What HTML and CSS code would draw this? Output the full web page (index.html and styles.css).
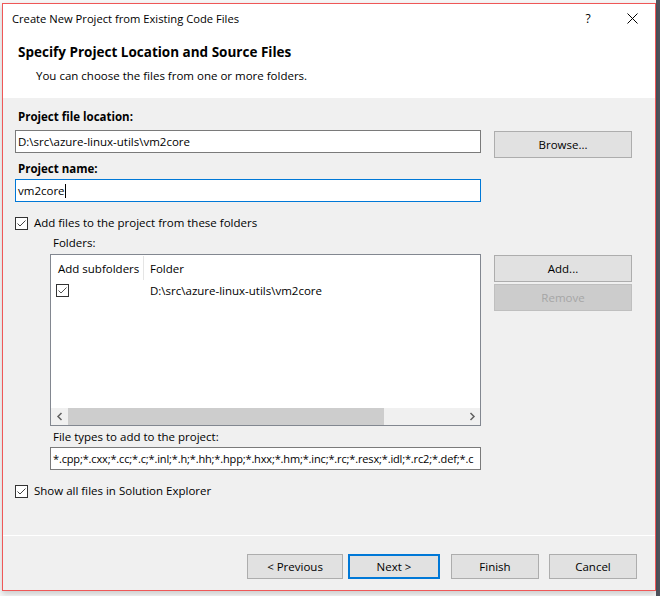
FILE: index.html
```html
<!DOCTYPE html>
<html>
<head>
<meta charset="utf-8">
<link rel="stylesheet" href="styles.css">
</head>
<body>
<div class="window">
  <div class="top">
    <div class="titlebar">
      <span class="title">Create New Project from Existing Code Files</span>
      <span class="cap-btn help">?</span>
      <span class="cap-btn close">
        <svg width="11" height="11" viewBox="0 0 11 11"><path d="M0.5 0.5 L10.5 10.5 M10.5 0.5 L0.5 10.5" stroke="#000" stroke-width="1" fill="none"/></svg>
      </span>
    </div>
    <div class="header">
      <div class="heading">Specify Project Location and Source Files</div>
      <div class="subheading">You can choose the files from one or more folders.</div>
    </div>
  </div>

  <div class="content">
    <div class="label bold first">Project file location:</div>
    <div class="row">
      <div class="textbox">D:\src\azure-linux-utils\vm2core</div>
      <div class="btn side-btn">Browse...</div>
    </div>
    <div class="label bold name-label">Project name:</div>
    <div class="textbox focused">vm2core<span class="caret"></span></div>

    <div class="check-row add-files">
      <span class="checkbox"><svg width="13" height="13" viewBox="0 0 13 13"><path d="M2.5 6.5 L5 9 L10.5 3.5" stroke="#444" stroke-width="1" fill="none"/></svg></span>
      <span>Add files to the project from these folders</span>
    </div>

    <div class="indent">
      <div class="label folders-label">Folders:</div>
      <div class="row folders-row">
        <div class="listbox">
          <div class="list-head">
            <div class="col1">Add subfolders</div>
            <div class="col-sep"></div>
            <div class="col2">Folder</div>
          </div>
          <div class="list-row">
            <div class="col1 cell-check"><span class="checkbox"><svg width="13" height="13" viewBox="0 0 13 13"><path d="M2.5 6.5 L5 9 L10.5 3.5" stroke="#555" stroke-width="1" fill="none"/></svg></span></div>
            <div class="col2 cell-text">D:\src\azure-linux-utils\vm2core</div>
          </div>
          <div class="list-fill"></div>
          <div class="hscroll">
            <div class="arrow"><svg width="8" height="9" viewBox="0 0 8 9"><path d="M5.5 1 L2 4.5 L5.5 8" stroke="#606060" stroke-width="1.5" fill="none"/></svg></div>
            <div class="thumb"></div>
            <div class="track"></div>
            <div class="arrow"><svg width="8" height="9" viewBox="0 0 8 9"><path d="M2.5 1 L6 4.5 L2.5 8" stroke="#606060" stroke-width="1.5" fill="none"/></svg></div>
          </div>
        </div>
        <div class="side-col">
          <div class="btn side-btn add-btn">Add...</div>
          <div class="btn side-btn disabled">Remove</div>
        </div>
      </div>
      <div class="label types-label">File types to add to the project:</div>
      <div class="textbox types-box"><span class="types-text">*.cpp;*.cxx;*.cc;*.c;*.inl;*.h;*.hh;*.hpp;*.hxx;*.hm;*.inc;*.rc;*.resx;*.idl;*.rc2;*.def;*.c</span></div>
    </div>

    <div class="check-row show-all">
      <span class="checkbox"><svg width="13" height="13" viewBox="0 0 13 13"><path d="M2.5 6.5 L5 9 L10.5 3.5" stroke="#444" stroke-width="1" fill="none"/></svg></span>
      <span>Show all files in Solution Explorer</span>
    </div>
  </div>

  <div class="footer">
    <div class="btn foot-btn prev">&lt; Previous</div>
    <div class="btn foot-btn next">Next &gt;</div>
    <div class="btn foot-btn finish">Finish</div>
    <div class="btn foot-btn cancel">Cancel</div>
  </div>
</div>
</body>
</html>
```
FILE: styles.css
```css
html, body {
  margin: 0;
  padding: 0;
  height: 596px;
  overflow: hidden;
}
body {
  background: linear-gradient(to right, #f7f7f7 656px, #4f535d 656px);
  font-family: "Open Sans", "Noto Sans", "Liberation Sans", sans-serif;
  font-size: 11.5px;
  color: #000;
}
.window {
  box-sizing: border-box;
  width: 654px;
  height: 588px;
  margin: 3px 0 0 2px;
  border: 1px solid #ef5757;
  background: #f0f0f0;
  display: flex;
  flex-direction: column;
  box-shadow: 0 3px 6px rgba(0, 0, 0, 0.18);
}
.top {
  background: #fff;
  height: 94px;
}
.titlebar {
  height: 28px;
  display: flex;
  align-items: center;
}
.title {
  padding-left: 9px;
  flex: 1;
  font-size: 11.2px;
}
.cap-btn {
  height: 28px;
  display: flex;
  align-items: center;
  justify-content: center;
}
.help {
  width: 44px;
  font-size: 12px;
}
.close {
  width: 45px;
}
.header {
  padding-left: 15px;
}
.heading {
  margin-top: 11px;
  font-size: 13.5px;
  font-weight: bold;
  line-height: 18px;
}
.subheading {
  margin-top: 7px;
  padding-left: 18px;
  line-height: 16px;
}
.content {
  padding-left: 12px;
}
.label {
  line-height: 16px;
}
.bold {
  font-weight: bold;
  padding-left: 3px;
}
.first {
  margin-top: 11px;
  margin-bottom: 5px;
}
.name-label {
  margin-top: 3px;
  margin-bottom: 2px;
}
.row {
  display: grid;
  grid-template-columns: 466px 138px;
  column-gap: 13px;
  align-items: start;
}
.textbox {
  box-sizing: border-box;
  width: 466px;
  height: 23px;
  border: 1px solid #7a7a7a;
  background: #fff;
  padding-left: 2px;
  line-height: 21px;
  white-space: nowrap;
  overflow: hidden;
}
.textbox.focused {
  border-color: #0078d7;
}
.caret {
  display: inline-block;
  width: 1px;
  height: 14px;
  background: #000;
  vertical-align: -3px;
}
.btn {
  box-sizing: border-box;
  background: #e1e1e1;
  border: 1px solid #adadad;
  display: flex;
  align-items: center;
  justify-content: center;
}
.side-btn {
  height: 27px;
  margin-top: 1px;
  width: 138px;
}
.side-btn.disabled {
  margin-top: 2px;
  background: #cccccc;
  border-color: #bfbfbf;
  color: #a6a6a6;
}
.check-row {
  display: flex;
  align-items: center;
  height: 16px;
  line-height: 16px;
}
.check-row .checkbox {
  margin-right: 6px;
}
.add-files {
  margin-top: 13px;
}
.checkbox {
  box-sizing: border-box;
  width: 13px;
  height: 13px;
  border: 1px solid #333;
  background: #fff;
  display: inline-block;
  position: relative;
}
.checkbox svg {
  position: absolute;
  left: -1px;
  top: -1px;
}
.indent {
  padding-left: 35px;
}
.folders-label {
  margin-top: 4px;
  padding-left: 3px;
  margin-bottom: 3px;
}
.folders-row {
  grid-template-columns: 431px 138px;
}
.listbox {
  box-sizing: border-box;
  width: 431px;
  height: 172px;
  border: 1px solid #828790;
  background: #fff;
  display: flex;
  flex-direction: column;
}
.list-head {
  display: flex;
  height: 26px;
  align-items: center;
}
.col1 {
  width: 92px;
  box-sizing: border-box;
  padding-left: 7px;
}
.col-sep {
  width: 1px;
  height: 24px;
  background: #e5e5e5;
}
.col2 {
  padding-left: 6px;
}
.list-row {
  display: flex;
  height: 18px;
  align-items: center;
}
.cell-check {
  padding-left: 5px;
  display: flex;
  align-items: center;
}
.cell-text {
  padding-left: 7px;
}
.list-fill {
  flex: 1;
}
.hscroll {
  height: 17px;
  display: flex;
  background: #f0f0f0;
}
.arrow {
  width: 17px;
  display: flex;
  align-items: center;
  justify-content: center;
}
.thumb {
  width: 316px;
  background: #cdcdcd;
}
.track {
  flex: 1;
}
.side-col {
  display: flex;
  flex-direction: column;
}
.types-label {
  margin-top: 3px;
  margin-bottom: 2px;
  padding-left: 3px;
}
.types-box {
  width: 431px;
}
.types-text {
  font-size: 11px;
  letter-spacing: -0.15px;
}
.show-all {
  margin-top: 13px;
}
.footer {
  margin-top: auto;
  border-top: 1px solid #fff;
  padding: 18px 18px 11px 0;
  display: flex;
  justify-content: flex-end;
}
.foot-btn {
  height: 25px;
}
.prev {
  width: 96px;
  margin-right: 5px;
}
.next {
  width: 92px;
  border: 2px solid #0078d7;
  margin-right: 11px;
}
.finish {
  width: 88px;
  margin-right: 10px;
}
.cancel {
  width: 88px;
}
```
